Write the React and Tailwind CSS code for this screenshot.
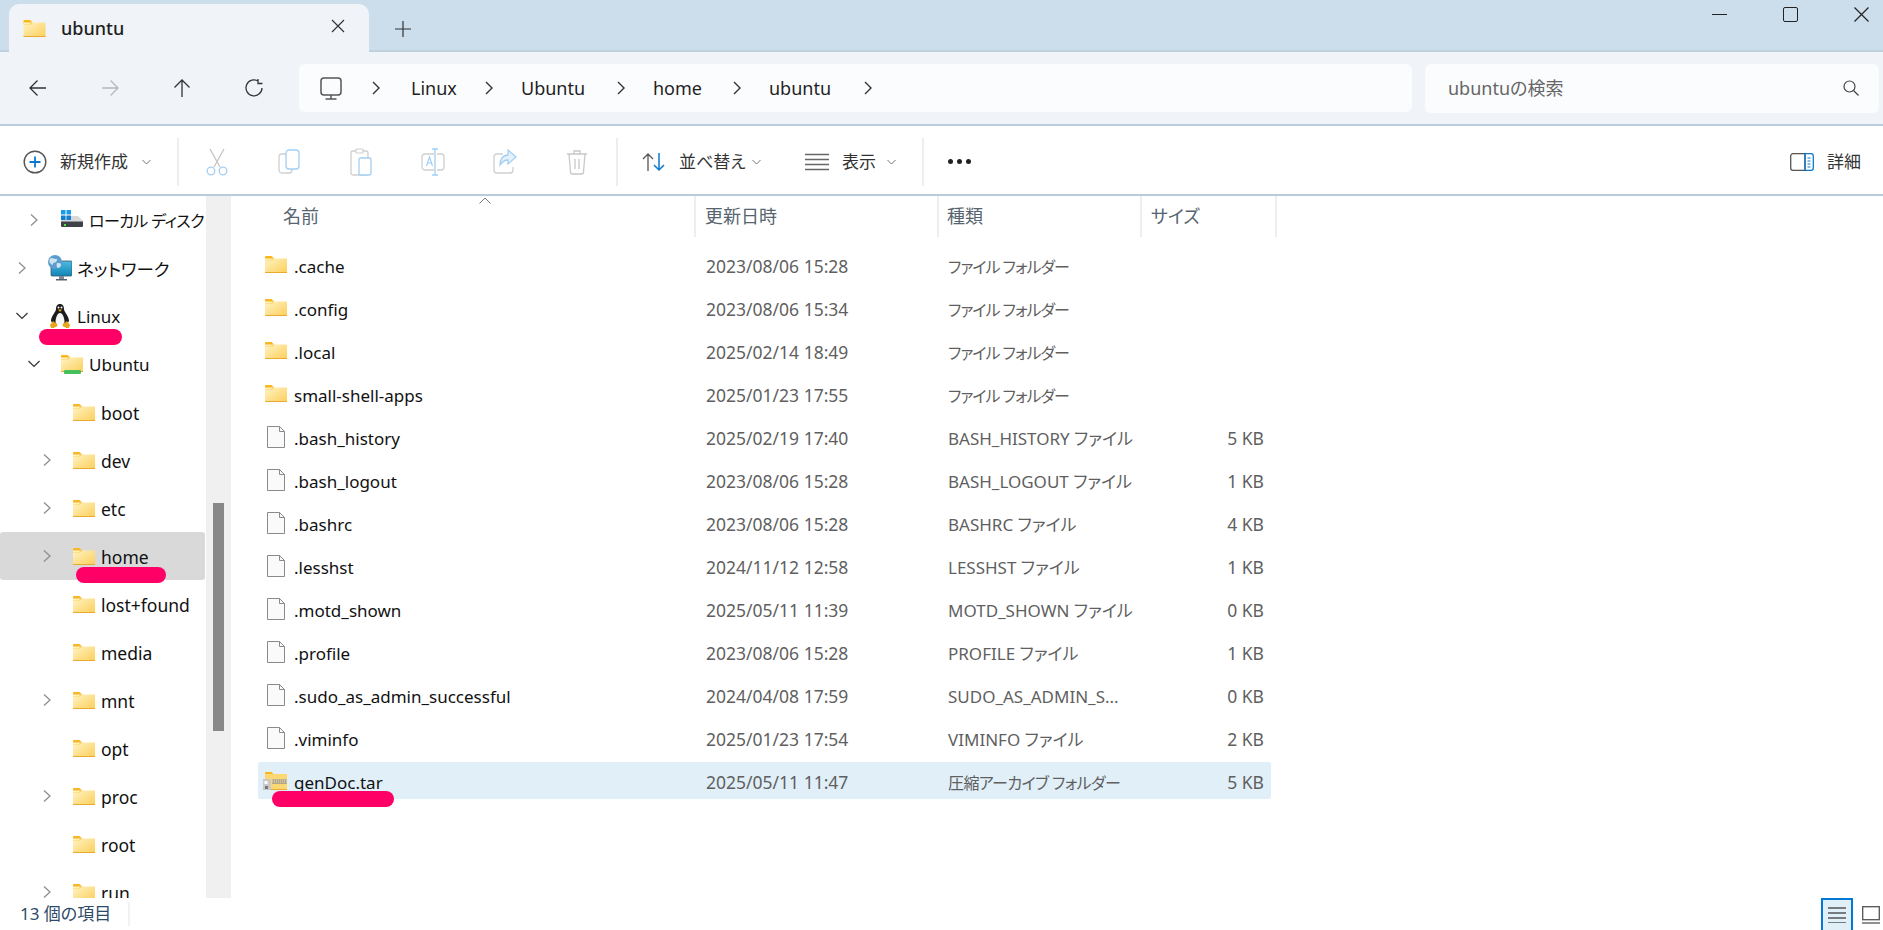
import React from 'react';

const tightFolder = 'text-[16px] tracking-[-1px]';
const tightArchive = 'text-[16px] tracking-[-0.6px]';

const folderRows = [
  { name: '.cache', date: '2023/08/06 15:28', kind: 'ファイル フォルダー', kindClass: tightFolder, size: '', icon: 'folder' },
  { name: '.config', date: '2023/08/06 15:34', kind: 'ファイル フォルダー', kindClass: tightFolder, size: '', icon: 'folder' },
  { name: '.local', date: '2025/02/14 18:49', kind: 'ファイル フォルダー', kindClass: tightFolder, size: '', icon: 'folder' },
  { name: 'small-shell-apps', date: '2025/01/23 17:55', kind: 'ファイル フォルダー', kindClass: tightFolder, size: '', icon: 'folder' },
  { name: '.bash_history', date: '2025/02/19 17:40', kind: 'BASH_HISTORY ファイル', size: '5 KB', icon: 'file' },
  { name: '.bash_logout', date: '2023/08/06 15:28', kind: 'BASH_LOGOUT ファイル', size: '1 KB', icon: 'file' },
  { name: '.bashrc', date: '2023/08/06 15:28', kind: 'BASHRC ファイル', size: '4 KB', icon: 'file' },
  { name: '.lesshst', date: '2024/11/12 12:58', kind: 'LESSHST ファイル', size: '1 KB', icon: 'file' },
  { name: '.motd_shown', date: '2025/05/11 11:39', kind: 'MOTD_SHOWN ファイル', size: '0 KB', icon: 'file' },
  { name: '.profile', date: '2023/08/06 15:28', kind: 'PROFILE ファイル', size: '1 KB', icon: 'file' },
  { name: '.sudo_as_admin_successful', date: '2024/04/08 17:59', kind: 'SUDO_AS_ADMIN_S...', size: '0 KB', icon: 'file' },
  { name: '.viminfo', date: '2025/01/23 17:54', kind: 'VIMINFO ファイル', size: '2 KB', icon: 'file' },
  { name: 'genDoc.tar', date: '2025/05/11 11:47', kind: '圧縮アーカイブ フォルダー', kindClass: tightArchive, size: '5 KB', icon: 'zip', selected: true },
];

const treeRows = [
  { label: 'ローカル ディスク', depth: 1, arrow: 'right', icon: 'disk', labelClass: 'text-[16px] tracking-[-0.6px]' },
  { label: 'ネットワーク', depth: 0, arrow: 'right', icon: 'network' },
  { label: 'Linux', depth: 0, arrow: 'down', icon: 'penguin', labelClass: 'text-[17px]' },
  { label: 'Ubuntu', depth: 1, arrow: 'down', icon: 'distro', labelClass: 'text-[17px]' },
  { label: 'boot', depth: 2, icon: 'folder' },
  { label: 'dev', depth: 2, arrow: 'right', icon: 'folder' },
  { label: 'etc', depth: 2, arrow: 'right', icon: 'folder' },
  { label: 'home', depth: 2, arrow: 'right', icon: 'folder', active: true },
  { label: 'lost+found', depth: 2, icon: 'folder' },
  { label: 'media', depth: 2, icon: 'folder' },
  { label: 'mnt', depth: 2, arrow: 'right', icon: 'folder' },
  { label: 'opt', depth: 2, icon: 'folder' },
  { label: 'proc', depth: 2, arrow: 'right', icon: 'folder' },
  { label: 'root', depth: 2, icon: 'folder' },
  { label: 'run', depth: 2, arrow: 'right', icon: 'folder' },
];

const depthPad = ['pl-[16px]', 'pl-[28px]', 'pl-[41px]'];

const crumbs = [
  { label: 'Linux', width: 'w-[113px]', gap: 'ml-[31px]' },
  { label: 'Ubuntu', width: 'w-[132px]', gap: 'ml-[28px]' },
  { label: 'home', width: 'w-[116px]', gap: 'ml-[28px]' },
  { label: 'ubuntu', width: 'w-[131px]', gap: 'ml-[28px]' },
];

function FolderIcon({ className = 'w-[22px] h-[17px]' }) {
  return (
    <svg viewBox="0 0 22 17" className={className}>
      <defs>
        <linearGradient id="folderFill" x1="0" y1="0" x2="1" y2="1">
          <stop offset="0" stopColor="#fff3c4" />
          <stop offset="1" stopColor="#fccf5a" />
        </linearGradient>
      </defs>
      <path d="M0 1a1 1 0 0 1 1-1h5.500l2.200 2H8L6 4H0z" fill="#f9b71e" />
      <rect x="0" y="2.500" width="22" height="14.500" fill="url(#folderFill)" />
      <path d="M0 4h6l2-2h1.500l-2 2.600H0z" fill="#f9b71e" opacity="0.5" />
      <rect x="0" y="16" width="22" height="1" fill="#eaaa2f" />
    </svg>
  );
}

function ZipIcon() {
  return (
    <svg viewBox="0 0 24 18" className="w-[24px] h-[18px]">
      <path d="M2 1a1 1 0 0 1 1-1h5.500l2 2H2z" fill="#f9b71e" />
      <rect x="2" y="2" width="22" height="16" fill="#fcd872" />
      <rect x="2" y="17" width="22" height="1" fill="#eaaa2f" />
      <rect x="9" y="7" width="15" height="5" fill="#b5a888" />
      <path d="M9 8h15M9 10h15" stroke="#f0e6c4" strokeWidth="0.8" strokeDasharray="1 1" />
      <rect x="0" y="7" width="8" height="11" fill="#c9c9c9" />
      <rect x="1.500" y="9" width="3" height="3" fill="#fff" />
      <rect x="2" y="14" width="3" height="3" fill="#777" />
    </svg>
  );
}

function FileIcon() {
  return (
    <svg viewBox="0 0 18 22" className="w-[18px] h-[22px]">
      <path d="M.5.500h12l5 5v16H.5z" fill="#fafafa" stroke="#8a8a8a" />
      <path d="M12.500.500v5h5" fill="none" stroke="#8a8a8a" />
    </svg>
  );
}

function Penguin() {
  return (
    <svg viewBox="0 0 20 24" className="w-[20px] h-[24px]">
      <path d="M10 0c3 0 4 2.500 4 5 0 3 5 7 5 12l-2 3H3l-2-3c0-5 5-9 5-12 0-2.500 1-5 4-5z" fill="#1c1c1c" />
      <path d="M10 9c2.600 0 4.500 5 4.500 9 0 2-2 3-4.500 3s-4.500-1-4.500-3c0-4 1.900-9 4.500-9z" fill="#f6f6f6" />
      <path d="M8 5.500h4L10 8z" fill="#e8a21a" />
      <circle cx="8.500" cy="3.500" r="1" fill="#fff" />
      <circle cx="11.500" cy="3.500" r="1" fill="#fff" />
      <path d="M3 17l4 3 .5 2-4 2H1l-1-3z" fill="#e6a51d" />
      <path d="M17 17l-4 3-.5 2 4 2H19l1-3z" fill="#e6a51d" />
    </svg>
  );
}

function NetworkIcon() {
  return (
    <svg viewBox="0 0 24 26" className="w-[24px] h-[26px]">
      <defs>
        <linearGradient id="screenFill" x1="0" y1="0" x2="0" y2="1">
          <stop offset="0" stopColor="#4fb9e0" />
          <stop offset="1" stopColor="#0f86b8" />
        </linearGradient>
      </defs>
      <rect x="3" y="6" width="21" height="15" rx="1" fill="url(#screenFill)" stroke="#3c5b6b" strokeWidth="0.8" />
      <rect x="11" y="21" width="5" height="3" fill="#7c8a93" />
      <rect x="8" y="24" width="11" height="1.500" fill="#55636c" />
      <circle cx="7" cy="7" r="7" fill="#5c9dd0" />
      <path d="M3 3c2 0 3 1 5 1s1 2 0 3-3 0-3 2-2 0-3-1-1-4 1-5zM9 8c2 0 4 0 4 2s-2 3-3 3-2-3-1-5z" fill="#cfe3ef" />
    </svg>
  );
}

function DiskIcon() {
  return (
    <svg viewBox="0 0 22 18" className="w-[22px] h-[18px] -mt-[3px]">
      <path d="M3 6h14l5 5H0z" fill="#d8d8d8" />
      <rect x="0" y="11" width="22" height="6" rx="1" fill="#3f4347" />
      <rect x="0" y="11" width="22" height="1" fill="#8b8f93" />
      <rect x="3" y="14" width="2" height="2" fill="#4ce04c" />
      <rect x="0" y="0" width="4.500" height="4.500" fill="#1a9bea" />
      <rect x="5.500" y="0" width="4.500" height="4.500" fill="#1a9bea" />
      <rect x="0" y="5.500" width="4.500" height="4.500" fill="#0f7fd0" />
      <rect x="5.500" y="5.500" width="4.500" height="4.500" fill="#0f7fd0" />
    </svg>
  );
}

function DistroIcon() {
  return (
    <div className="relative w-[22px] h-[19px]">
      <FolderIcon />
      <span className="absolute left-[3px] top-[15px] w-[17px] h-[4px] rounded-[1px] bg-[#46c05a]" />
    </div>
  );
}

function TreeIcon({ type }) {
  if (type === 'disk') return <DiskIcon />;
  if (type === 'network') return <NetworkIcon />;
  if (type === 'penguin') return <Penguin />;
  if (type === 'distro') return <DistroIcon />;
  return <FolderIcon />;
}

function Chevron({ dir, className = '' }) {
  if (dir === 'down') {
    return (
      <svg viewBox="0 0 12 8" className={`w-[12px] h-[8px] ${className}`}>
        <path d="M.5 1L6 6.500 11.500 1" fill="none" stroke="#333" strokeWidth="1.200" />
      </svg>
    );
  }
  return (
    <svg viewBox="0 0 8 12" className={`w-[8px] h-[12px] ${className}`}>
      <path d="M1 .5L7 6 1 11.500" fill="none" stroke="#8f8f8f" strokeWidth="1.300" />
    </svg>
  );
}

function SmallCaret() {
  return (
    <svg viewBox="0 0 9 6" className="w-[9px] h-[6px]">
      <path d="M.5 1L4.500 5 8.500 1" fill="none" stroke="#777" strokeWidth="1" />
    </svg>
  );
}

function CrumbArrow() {
  return (
    <svg viewBox="0 0 8 14" className="w-[8px] h-[14px] shrink-0">
      <path d="M1 1l6 6-6 6" fill="none" stroke="#333" strokeWidth="1.400" />
    </svg>
  );
}

function NavIcon({ d, stroke = '#333' }) {
  return (
    <div className="w-[72px] flex justify-center">
      <svg viewBox="0 0 20 20" className="w-[20px] h-[20px]">
        <path d={d} fill="none" stroke={stroke} strokeWidth="1.300" />
      </svg>
    </div>
  );
}

function ToolCell({ children }) {
  return <div className="w-[72px] flex justify-center">{children}</div>;
}

function Separator() {
  return <div className="w-[2px] h-[48px] bg-[#eeeeee] shrink-0" />;
}

function Toolbar() {
  return (
    <div className="h-[70px] pt-[3px] shrink-0 border-b-2 border-[#bccbd9] bg-white flex items-center text-[17px] text-[#333] whitespace-nowrap">
      <svg viewBox="0 0 24 24" className="ml-[23px] w-[24px] h-[24px] shrink-0">
        <circle cx="12" cy="12" r="10.800" fill="none" stroke="#555" strokeWidth="1.400" />
        <path d="M12 6.500v11M6.500 12h11" stroke="#0a7ad1" strokeWidth="1.800" />
      </svg>
      <span className="ml-[13px] w-[72px] shrink-0">新規作成</span>
      <span className="ml-[10px] w-[35px] shrink-0"><SmallCaret /></span>
      <Separator />
      <div className="ml-[2px] flex items-center shrink-0">
        <ToolCell>
          <svg viewBox="0 0 22 28" className="w-[22px] h-[28px]">
            <path d="M4 1l10 18M18 1L8 19" fill="none" stroke="#c4c4c4" strokeWidth="1.300" />
            <circle cx="5" cy="23" r="3.800" fill="none" stroke="#a4cff2" strokeWidth="1.300" />
            <circle cx="17" cy="23" r="3.800" fill="none" stroke="#a4cff2" strokeWidth="1.300" />
          </svg>
        </ToolCell>
        <ToolCell>
          <svg viewBox="0 0 22 26" className="w-[22px] h-[26px]">
            <rect x="1" y="5" width="13" height="19" rx="3" fill="none" stroke="#cfcfcf" strokeWidth="1.300" />
            <rect x="8" y="1" width="13" height="19" rx="3" fill="#fff" stroke="#a4cff2" strokeWidth="1.300" />
          </svg>
        </ToolCell>
        <ToolCell>
          <svg viewBox="0 0 22 28" className="w-[22px] h-[28px]">
            <rect x="1" y="3" width="17" height="24" rx="2" fill="none" stroke="#cfcfcf" strokeWidth="1.300" />
            <rect x="6" y="1" width="7" height="4" rx="1" fill="#fff" stroke="#cfcfcf" strokeWidth="1.200" />
            <rect x="9" y="10" width="12" height="17" rx="2" fill="#fff" stroke="#a4cff2" strokeWidth="1.300" />
          </svg>
        </ToolCell>
        <ToolCell>
          <svg viewBox="0 0 24 28" className="w-[24px] h-[28px]">
            <rect x="1" y="6" width="22" height="16" rx="3" fill="none" stroke="#cfcfcf" strokeWidth="1.300" />
            <rect x="13" y="1" width="3" height="26" fill="#fff" />
            <path d="M11 1h6M14 1v26M11 27h6" fill="none" stroke="#a4cff2" strokeWidth="1.300" />
            <path d="M5.500 18l3-9 3 9M6.500 15h4" fill="none" stroke="#a4cff2" strokeWidth="1.200" />
          </svg>
        </ToolCell>
        <ToolCell>
          <svg viewBox="0 0 24 26" className="w-[24px] h-[26px]">
            <path d="M10 5H4a3 3 0 0 0-3 3v13a3 3 0 0 0 3 3h13a3 3 0 0 0 3-3v-3" fill="none" stroke="#cfcfcf" strokeWidth="1.300" />
            <path d="M15 1l8 7-8 7v-4c-4 0-6 2-8 5 0-6 3-10 8-10z" fill="#e4f1fb" stroke="#a4cff2" strokeWidth="1.300" />
          </svg>
        </ToolCell>
        <ToolCell>
          <svg viewBox="0 0 22 26" className="w-[22px] h-[26px]">
            <path d="M1 5h20M8 5V2h6v3M3 5l1.500 18a2 2 0 0 0 2 2h9a2 2 0 0 0 2-2L19 5M9 10v10M13 10v10" fill="none" stroke="#c8c8c8" strokeWidth="1.300" />
          </svg>
        </ToolCell>
      </div>
      <div className="ml-[3px]"><Separator /></div>
      <svg viewBox="0 0 24 20" className="ml-[24px] w-[24px] h-[20px] shrink-0">
        <path d="M6 19V2M1 7l5-5 5 5" fill="none" stroke="#555" strokeWidth="1.300" />
        <path d="M17 1v17M12 13l5 5 5-5" fill="none" stroke="#0a7ad1" strokeWidth="1.500" />
      </svg>
      <span className="ml-[13px] w-[64px] shrink-0">並べ替え</span>
      <span className="ml-[9px] w-[53px] shrink-0"><SmallCaret /></span>
      <svg viewBox="0 0 24 18" className="w-[24px] h-[18px] shrink-0">
        <path d="M0 1.500h24M0 6.500h24M0 11.500h24M0 16.500h24" stroke="#666" strokeWidth="1.300" />
      </svg>
      <span className="ml-[13px] w-[36px] shrink-0">表示</span>
      <span className="ml-[9px] w-[35px] shrink-0"><SmallCaret /></span>
      <Separator />
      <div className="ml-[24px] flex gap-[4px]">
        <span className="w-[5px] h-[5px] rounded-full bg-[#222]" />
        <span className="w-[5px] h-[5px] rounded-full bg-[#222]" />
        <span className="w-[5px] h-[5px] rounded-full bg-[#222]" />
      </div>
      <div className="ml-auto mr-[22px] flex items-center">
        <svg viewBox="0 0 24 18" className="w-[24px] h-[18px]">
          <path d="M15 .7H3A2.300 2.300 0 0 0 .7 3v12A2.300 2.300 0 0 0 3 17.300h12z" fill="none" stroke="#555" strokeWidth="1.300" />
          <path d="M15 .7h6A2.300 2.300 0 0 1 23.300 3v12a2.300 2.300 0 0 1-2.300 2.300h-6z" fill="none" stroke="#0a7ad1" strokeWidth="1.300" />
          <path d="M17.500 5h3M17.500 8h3M17.500 11h3M17.500 14h3" stroke="#0a7ad1" strokeWidth="1.200" />
        </svg>
        <span className="ml-[13px]">詳細</span>
      </div>
    </div>
  );
}

function AddressBar() {
  return (
    <div className="h-[74px] shrink-0 border-b-2 border-[#bccbd9] bg-[#f0f4f9] flex items-center pl-[2px]">
      <NavIcon d="M18 10H2M9.500 2.500L2 10l7.500 7.500" />
      <NavIcon d="M2 10h16M10.500 2.500L18 10l-7.500 7.500" stroke="#b4b8bb" />
      <NavIcon d="M10 19V2M2.500 9.500L10 2l7.500 7.500" />
      <NavIcon d="M14.500 3.200A8 8 0 1 0 18 10M14 1v4.500h4.500" />
      <div className="ml-[9px] w-[1113px] h-[48px] rounded-[6px] bg-[#fbfcfe] flex items-center pl-[21px] text-[18px] text-[#1f1f1f]">
        <svg viewBox="0 0 22 23" className="w-[22px] h-[23px] mr-[30px] shrink-0">
          <rect x="1" y="1" width="20" height="17" rx="3" fill="none" stroke="#555" strokeWidth="1.500" />
          <path d="M11 18v4M5.500 22h11" fill="none" stroke="#555" strokeWidth="1.500" />
        </svg>
        {crumbs.map((c) => (
          <div key={c.label} className={`${c.width} flex items-center shrink-0`}>
            <CrumbArrow />
            <span className={c.gap}>{c.label}</span>
          </div>
        ))}
        <CrumbArrow />
      </div>
      <div className="ml-[13px] w-[454px] h-[49px] rounded-[6px] bg-[#fbfcfe] flex items-center pl-[23px] pr-[20px] justify-between text-[18px] text-[#666]">
        <span>ubuntuの検索</span>
        <svg viewBox="0 0 16 16" className="w-[16px] h-[16px]">
          <circle cx="6.500" cy="6.500" r="5.500" fill="none" stroke="#444" strokeWidth="1.200" />
          <path d="M10.500 10.500L15.500 15.500" stroke="#444" strokeWidth="1.200" />
        </svg>
      </div>
    </div>
  );
}

function TabBar() {
  return (
    <div className="h-[52px] shrink-0 border-b-2 border-[#bfd0de] bg-[#ccddeb] flex items-start relative">
      <div className="ml-[9px] mt-[4px] w-[360px] h-[48px] rounded-t-[10px] bg-[#f0f4f9] flex items-center pl-[14px] pr-[24px] shrink-0 z-10">
        <FolderIcon className="w-[23px] h-[17px]" />
        <span className="ml-[15px] text-[18px] font-medium text-[#1f1f1f]">ubuntu</span>
        <svg viewBox="0 0 14 14" className="ml-auto w-[14px] h-[14px] -mt-[4px]">
          <path d="M1 1l12 12M13 1L1 13" stroke="#333" strokeWidth="1.200" />
        </svg>
      </div>
      <svg viewBox="0 0 16 16" className="ml-[26px] mt-[21px] w-[16px] h-[16px]">
        <path d="M8 0v16M0 8h16" stroke="#333" strokeWidth="1.200" />
      </svg>
      <div className="ml-auto mt-[7px] flex items-start">
        <div className="w-[71px] h-[15px] flex items-center justify-center">
          <span className="w-[15px] h-[1.500px] bg-[#222]" />
        </div>
        <div className="w-[71px] mr-[13px] flex justify-center">
          <span className="w-[15px] h-[15px] rounded-[2px] border-[1.500px] border-[#222]" />
        </div>
        <div className="w-[44px] flex justify-center">
          <svg viewBox="0 0 15 15" className="w-[15px] h-[15px]">
            <path d="M.5.500l14 14M14.500.500l-14 14" stroke="#222" strokeWidth="1.200" />
          </svg>
        </div>
      </div>
    </div>
  );
}

function Sidebar() {
  return (
    <div className="w-[231px] shrink-0 flex">
      <div className="w-[206px] pr-[1px] overflow-hidden text-[17.5px] text-[#111]">
        {treeRows.map((row) => (
          <div
            key={row.label}
            className={`h-[48px] shrink-0 flex items-center rounded-[3px] ${depthPad[row.depth]} ${row.active ? 'bg-[#d9d9d9]' : ''}`}
          >
            <span className="w-[12px] flex justify-center shrink-0">
              {row.arrow && <Chevron dir={row.arrow} />}
            </span>
            <span className={`${row.depth === 2 ? 'ml-[17px]' : 'ml-[18px]'} w-[31px] pr-[3px] flex justify-center shrink-0`}>
              <TreeIcon type={row.icon} />
            </span>
            <span className={`whitespace-nowrap pt-[2px] ${row.labelClass || ''}`}>{row.label}</span>
          </div>
        ))}
      </div>
      <div className="w-[25px] bg-[#f0f0f0] pl-[7px] pt-[307px]">
        <div className="w-[11px] h-[228px] bg-[#888888]" />
      </div>
    </div>
  );
}

function HeaderCell({ width, pad, children }) {
  return (
    <div className={`${width} ${pad} h-[41px] flex items-center shrink-0 border-r-2 border-[#eeeeee] text-[#56646f]`}>
      {children}
    </div>
  );
}

function FileTable() {
  return (
    <div className="flex-1 min-w-0 text-[18px]">
      <div className="flex relative">
        <HeaderCell width="w-[465px]" pad="pl-[52px]">名前</HeaderCell>
        <HeaderCell width="w-[243px]" pad="pl-[9px]">更新日時</HeaderCell>
        <HeaderCell width="w-[203px]" pad="pl-[8px]">種類</HeaderCell>
        <HeaderCell width="w-[135px]" pad="pl-[9px]">サイズ</HeaderCell>
        <svg viewBox="0 0 12 7" className="absolute left-[248px] top-[1px] w-[12px] h-[7px]">
          <path d="M.5 6.500L6 1l5.500 5.500" fill="none" stroke="#777" strokeWidth="1" />
        </svg>
      </div>
      <div className="mt-[9px] ml-[27px] w-[1013px]">
        {folderRows.map((row) => (
          <div
            key={row.name}
            className={`h-[37px] mb-[6px] flex items-center rounded-[2px] ${row.selected ? 'bg-[#e1eff9]' : ''}`}
          >
            <div className="w-[438px] flex items-center shrink-0">
              <span className="w-[36px] pl-[7px] flex shrink-0">
                {row.icon === 'folder' && <FolderIcon />}
                {row.icon === 'file' && <span className="ml-[2px]"><FileIcon /></span>}
                {row.icon === 'zip' && <span className="-ml-[2px]"><ZipIcon /></span>}
              </span>
              <span className="pt-[4px] text-[17px] text-[#111]">{row.name}</span>
            </div>
            <span className="w-[243px] pl-[10px] pt-[4px] shrink-0 text-[17.5px] text-[#5f5f5f]">{row.date}</span>
            <span className={`w-[203px] pl-[9px] pt-[4px] shrink-0 text-[#5f5f5f] whitespace-nowrap ${row.kindClass || 'text-[17px]'}`}>{row.kind}</span>
            <span className="w-[122px] pt-[4px] shrink-0 text-right text-[17.5px] text-[#5f5f5f]">{row.size}</span>
          </div>
        ))}
      </div>
    </div>
  );
}

function StatusBar() {
  return (
    <div className="h-[32px] shrink-0 bg-white flex items-center text-[17px] text-[#2d4a68]">
      <div className="w-[130px] pl-[20px] h-[24px] flex items-center border-r-2 border-[#f2f2f2]">13 個の項目</div>
      <div className="ml-auto mr-[3px] flex items-start h-full">
        <div className="w-[32px] h-[32px] border-2 border-b-0 border-[#0078d4] bg-[#e1eff9] flex items-center justify-center">
          <svg viewBox="0 0 18 16" className="w-[18px] h-[16px]">
            <path d="M0 1h18M0 6h18M0 11h18M0 16h18" stroke="#555" strokeWidth="1.300" />
          </svg>
        </div>
        <svg viewBox="0 0 18 18" className="ml-[9px] mt-[8px] w-[18px] h-[18px]">
          <rect x=".7" y=".7" width="16.600" height="13" fill="none" stroke="#555" strokeWidth="1.300" />
          <path d="M0 17h18" stroke="#555" strokeWidth="1.300" />
        </svg>
      </div>
    </div>
  );
}

export default function App() {
  return (
    <div className="relative w-[1883px] h-[930px] overflow-hidden bg-white flex flex-col font-['Noto_Sans','Noto_Sans_CJK_JP',sans-serif] [font-feature-settings:'palt']">
      <TabBar />
      <AddressBar />
      <Toolbar />
      <div className="flex-1 min-h-0 flex overflow-hidden">
        <Sidebar />
        <FileTable />
      </div>
      <StatusBar />

      {/* pink pen marks drawn over the screenshot */}
      <span className="absolute left-[39px] top-[329px] w-[83px] h-[16px] rounded-full bg-[#ff0066]" />
      <span className="absolute left-[76px] top-[567px] w-[90px] h-[16px] rounded-full bg-[#ff0066]" />
      <span className="absolute left-[272px] top-[791px] w-[122px] h-[16px] rounded-full bg-[#ff0066]" />
    </div>
  );
}
